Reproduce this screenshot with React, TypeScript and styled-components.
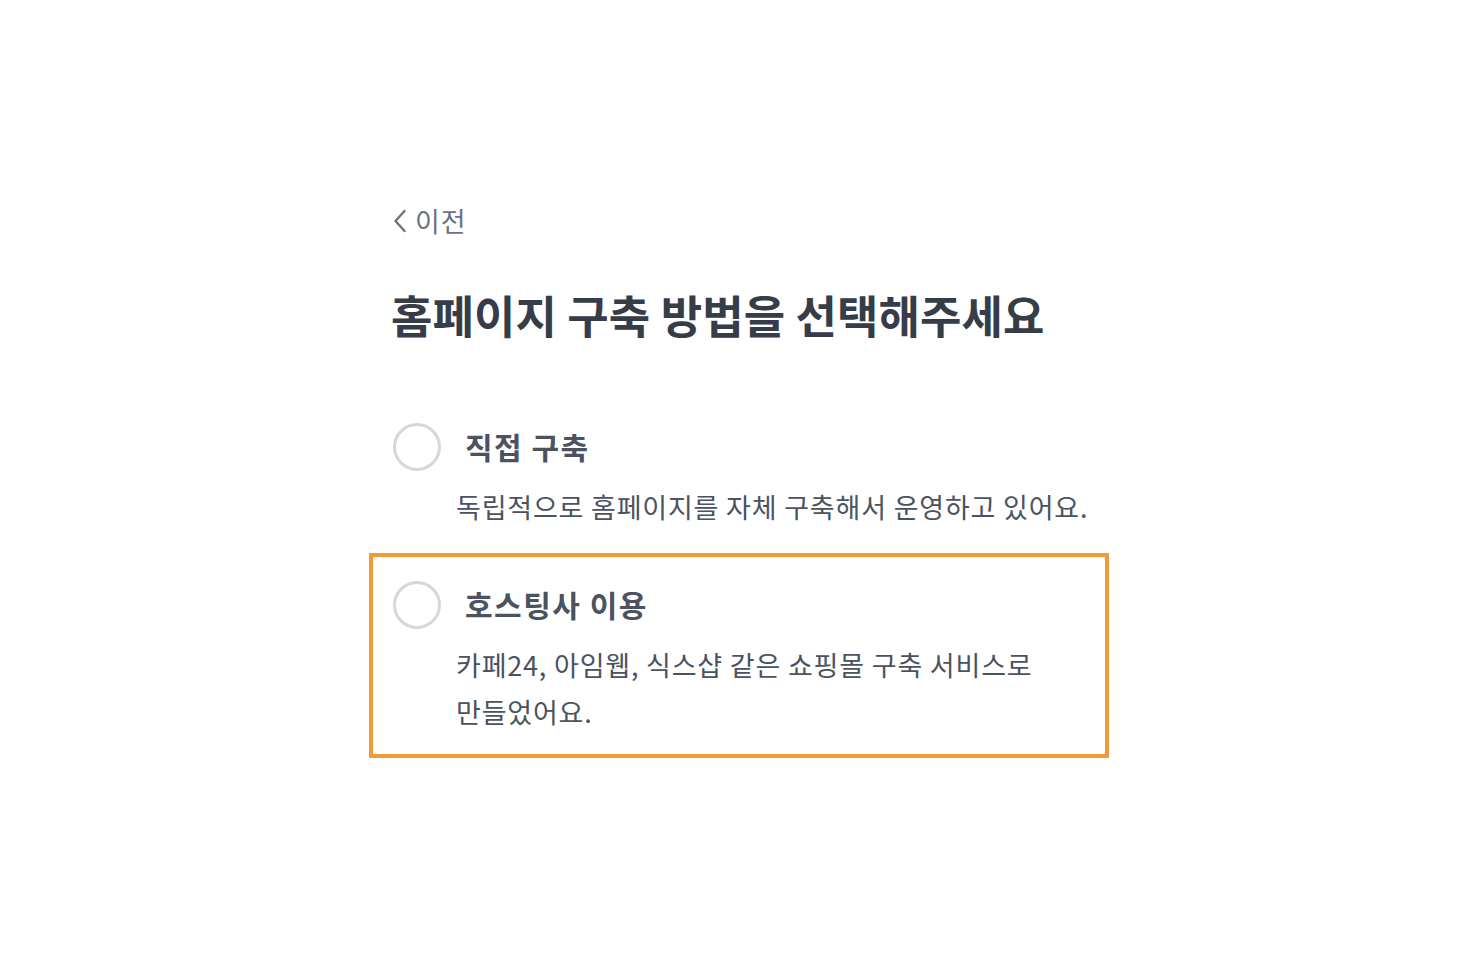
import React from "react";
import styled, { createGlobalStyle } from "styled-components";

const GlobalStyle = createGlobalStyle`
  html, body { margin: 0; padding: 0; background: #ffffff; }
  body { font-family: "Noto Sans CJK KR", "Noto Sans", sans-serif; -webkit-font-smoothing: antialiased; }
`;

const Page = styled.main`
  display: flex;
  justify-content: center;
  padding-top: 202px;
  min-height: 962px;
  box-sizing: border-box;
`;

const Container = styled.div`
  width: 740px;
  display: flex;
  flex-direction: column;
`;

const Header = styled.div`
  padding-left: 24px;
  display: flex;
  flex-direction: column;
  align-items: flex-start;
`;

const BackButton = styled.button`
  display: flex;
  align-items: center;
  gap: 8px;
  padding: 0;
  border: none;
  background: none;
  font-family: inherit;
  font-size: 27px;
  letter-spacing: 1px;
  line-height: 38px;
  color: #6b7280;
  cursor: pointer;
`;

const Title = styled.h1`
  margin: 44px 0 49px -2px;
  font-size: 45px;
  line-height: 62px;
  font-weight: 700;
  color: #363c48;
  letter-spacing: 0.1px;
`;

const Options = styled.div`
  display: flex;
  flex-direction: column;
`;

const Option = styled.label<{ $highlight?: boolean }>`
  display: flex;
  flex-direction: column;
  padding: 24px 8px 19px 20px;
  border: 4px solid ${(p) => (p.$highlight ? "#f29a38" : "transparent")};
  cursor: pointer;
`;

const OptionHead = styled.div`
  display: flex;
  align-items: center;
  gap: 24px;
`;

const Radio = styled.span`
  width: 48px;
  height: 48px;
  box-sizing: border-box;
  border-radius: 50%;
  border: 3px solid #d5d7dc;
  flex-shrink: 0;
`;

const OptionTitle = styled.span`
  font-size: 30px;
  font-weight: 700;
  line-height: 40px;
  letter-spacing: 1.5px;
  color: #4b5260;
  margin-top: -3px;
`;

const OptionDesc = styled.p`
  margin: 12px 0 0 63px;
  font-size: 27px;
  line-height: 47px;
  letter-spacing: 0.8px;
  color: #4b5260;
  word-break: keep-all;
`;

const Chevron = () => (
  <svg width="14" height="24" viewBox="0 0 14 24" fill="none">
    <path d="M11.5 2 L2.5 12 L11.5 22" stroke="#6b7280" strokeWidth="2.4" strokeLinecap="round" strokeLinejoin="round" />
  </svg>
);

export default function App() {
  return (
    <>
      <GlobalStyle />
      <Page>
        <Container>
          <Header>
            <BackButton>
              <Chevron />
              이전
            </BackButton>
            <Title>홈페이지 구축 방법을 선택해주세요</Title>
          </Header>
          <Options>
            <Option>
              <OptionHead>
                <Radio />
                <OptionTitle>직접 구축</OptionTitle>
              </OptionHead>
              <OptionDesc>독립적으로 홈페이지를 자체 구축해서 운영하고 있어요.</OptionDesc>
            </Option>
            <Option $highlight>
              <OptionHead>
                <Radio />
                <OptionTitle>호스팅사 이용</OptionTitle>
              </OptionHead>
              <OptionDesc>카페24, 아임웹, 식스샵 같은 쇼핑몰 구축 서비스로 만들었어요.</OptionDesc>
            </Option>
          </Options>
        </Container>
      </Page>
    </>
  );
}
